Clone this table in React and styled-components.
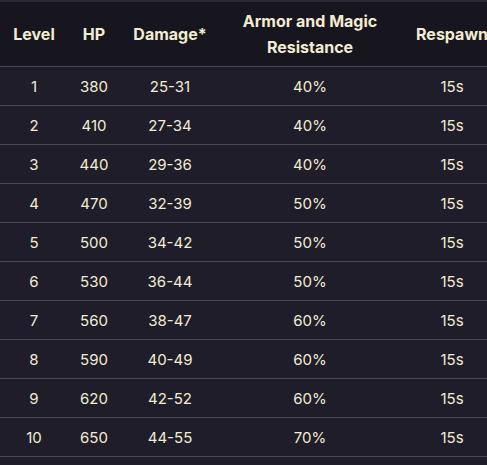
import React from "react";
import styled, { createGlobalStyle } from "styled-components";

const Global = createGlobalStyle`
  html, body { margin: 0; padding: 0; background: #1f1d29; }
  body { font-family: Inter, "Noto Sans", sans-serif; }
`;

const Wrap = styled.div`
  width: 487px;
  height: 465px;
  overflow: hidden;
  background: #1f1d29;
  border-top: 2px solid #2d2b37;
  box-sizing: border-box;
`;

const Table = styled.table`
  width: 504px;
  table-layout: fixed;
  border-collapse: collapse;
  color: #f3ecd2;
`;

const Head = styled.thead`
  background: #17161e;
`;

const Th = styled.th`
  height: 64px;
  padding: 0;
  font-weight: 700;
  font-size: 16px;
  line-height: 26px;
  text-align: center;
  vertical-align: middle;
  border-bottom: 1px solid #4a4855;
`;

const Td = styled.td`
  height: 38px;
  padding: 0;
  font-size: 15px;
  font-weight: 400;
  text-align: center;
  vertical-align: middle;
  border-bottom: 1px solid #4a4855;
`;

const ArmorHead = styled.span`
  display: inline-block;
  width: 150px;
`;

const rows = [
  [1, 380, "25-31", "40%", "15s"],
  [2, 410, "27-34", "40%", "15s"],
  [3, 440, "29-36", "40%", "15s"],
  [4, 470, "32-39", "50%", "15s"],
  [5, 500, "34-42", "50%", "15s"],
  [6, 530, "36-44", "50%", "15s"],
  [7, 560, "38-47", "60%", "15s"],
  [8, 590, "40-49", "60%", "15s"],
  [9, 620, "42-52", "60%", "15s"],
  [10, 650, "44-55", "70%", "15s"],
];

export default function App() {
  return (
    <>
      <Global />
      <Wrap>
        <Table>
          <colgroup>
            <col style={{ width: 68 }} />
            <col style={{ width: 52 }} />
            <col style={{ width: 100 }} />
            <col style={{ width: 180 }} />
            <col style={{ width: 104 }} />
          </colgroup>
          <Head>
            <tr>
              <Th>Level</Th>
              <Th>HP</Th>
              <Th>Damage*</Th>
              <Th>
                <ArmorHead>Armor and Magic Resistance</ArmorHead>
              </Th>
              <Th>Respawn</Th>
            </tr>
          </Head>
          <tbody>
            {rows.map((r) => (
              <tr key={r[0]}>
                {r.map((c, i) => (
                  <Td key={i}>{c}</Td>
                ))}
              </tr>
            ))}
          </tbody>
        </Table>
      </Wrap>
    </>
  );
}
